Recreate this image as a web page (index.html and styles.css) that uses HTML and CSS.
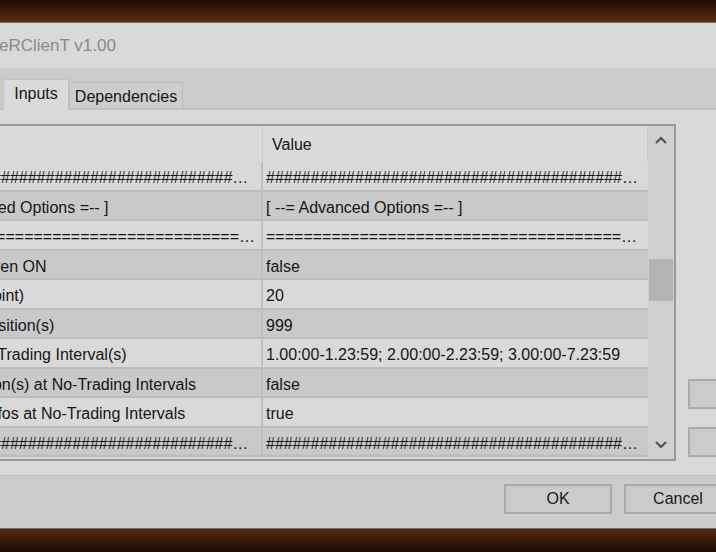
FILE: index.html
```html
<!DOCTYPE html>
<html>
  <head>
    <title>eRClienT v1.00</title>
    <link rel="stylesheet" href="styles.css">
  </head>

  <body>
    <div class="desk desk-top"></div>

    <div class="dialog">
      <div class="titlebar">eRClienT v1.00</div>

      <div class="tabstrip">
        <div class="tab selected">Inputs</div>
        <div class="tab">Dependencies</div>
      </div>

      <div class="panel">
        <div class="grid">
          <div class="grid-body">
            <div class="row head">
              <div class="cell name">Variable</div>
              <div class="cell value">Value</div>
            </div>
            <div class="row">
              <div class="cell name">############################################################</div>
              <div class="cell value">############################################################</div>
            </div>
            <div class="row">
              <div class="cell name">[ --= Advanced Options =-- ]</div>
              <div class="cell value">[ --= Advanced Options =-- ]</div>
            </div>
            <div class="row">
              <div class="cell name">================================================================</div>
              <div class="cell value">================================================================</div>
            </div>
            <div class="row">
              <div class="cell name">SL Break Even ON</div>
              <div class="cell value">false</div>
            </div>
            <div class="row">
              <div class="cell name">Slippage (point)</div>
              <div class="cell value">20</div>
            </div>
            <div class="row">
              <div class="cell name">Max Buy Position(s)</div>
              <div class="cell value">999</div>
            </div>
            <div class="row">
              <div class="cell name">Custom No-Trading Interval(s)</div>
              <div class="cell value">1.00:00-1.23:59; 2.00:00-2.23:59; 3.00:00-7.23:59</div>
            </div>
            <div class="row">
              <div class="cell name">Keep Position(s) at No-Trading Intervals</div>
              <div class="cell value">false</div>
            </div>
            <div class="row">
              <div class="cell name">Skip Alert Infos at No-Trading Intervals</div>
              <div class="cell value">true</div>
            </div>
            <div class="row">
              <div class="cell name">############################################################</div>
              <div class="cell value">############################################################</div>
            </div>
          </div>

          <div class="scrollbar">
            <div class="scroll-btn">
              <svg width="12" height="8" viewBox="0 0 12 8"><path d="M1 7 L6 2 L11 7" /></svg>
            </div>
            <div class="scroll-track">
              <div class="scroll-thumb"></div>
            </div>
            <div class="scroll-btn">
              <svg width="12" height="8" viewBox="0 0 12 8"><path d="M1 1 L6 6 L11 1" /></svg>
            </div>
          </div>
        </div>

        <div class="side">
          <button class="btn">Load</button>
          <button class="btn">Save</button>
        </div>
      </div>

      <div class="footer">
        <button class="btn">OK</button>
        <button class="btn">Cancel</button>
      </div>
    </div>

    <div class="desk desk-bottom"></div>
  </body>
</html>
```

FILE: styles.css
```css
html,
body {
  margin: 0;
  width: 716px;
  height: 552px;
  overflow: hidden;
}

body {
  font: 16px "Liberation Sans", Arial, sans-serif;
  color: #151515;
  background: #2a1505;
}

.desk {
  width: 100%;
}

.desk-top {
  height: 22px;
  background: linear-gradient(#1b0d04, #5b2c0a);
  border-bottom: 1px solid #707070;
}

.desk-bottom {
  height: 23px;
  background: linear-gradient(#56290a, #190c03);
  border-top: 1px solid #6c6c6c;
}

.dialog {
  /* the window is wider than the shot, its left part is off screen */
  margin-left: -92px;
  width: 912px;
  background: #d9d9d9;
}

.titlebar {
  height: 45px;
  line-height: 46px;
  padding-left: 91px;
  font-size: 17px;
  color: #8a8a8a;
}

.tabstrip {
  display: flex;
  align-items: flex-end;
  height: 40px;
  padding-left: 95px;
  background: #cbcbcb;
  border-bottom: 2px solid #c1c1c1;
}

.tab {
  box-sizing: border-box;
  width: 114px;
  height: 26px;
  line-height: 27px;
  text-align: center;
  border: 1px solid #bababa;
  border-bottom: none;
  background: #cdcdcd;
}

.tab.selected {
  width: 66px;
  height: 31px;
  line-height: 27px;
  margin-bottom: -2px;
  background: #dadada;
  border-color: #c2c2c2;
}

.panel {
  display: flex;
  padding: 14px 0;
}

.grid {
  display: flex;
  box-sizing: border-box;
  width: 768px;
  height: 337px;
  border: 2px solid #999;
  border-left: none;
  background: #d9d9d9;
}

.grid-body {
  flex: 1;
  overflow: hidden;
}

.row {
  display: flex;
  box-sizing: border-box;
  height: 29.5px;
  border-bottom: 2px solid #bcbcbc;
  background: #c9c9c9;
}

.row:nth-child(even) {
  background: #d9d9d9;
}

.row.head {
  height: 36px;
  border-bottom: none;
  background: #dadada;
}

.cell {
  box-sizing: border-box;
  min-width: 0;
  padding: 2px 4px 0 4px;
  line-height: 27px;
  white-space: nowrap;
  overflow: hidden;
  text-overflow: ellipsis;
}

.cell.name {
  width: 355px;
  flex: none;
  border-right: 2px solid #c0c0c0;
}

.cell.value {
  flex: 1;
  padding-left: 3px;
  padding-right: 10px;
}

.head .cell {
  padding-top: 0;
  line-height: 37px;
}

.head .cell.name {
  border-right: 1px solid #cbcbcb;
}

.head .cell.value {
  padding-left: 9px;
  border-right: 1px solid #cbcbcb;
}

.scrollbar {
  display: flex;
  flex-direction: column;
  width: 26px;
  background: #d0d0d0;
}

.scroll-btn {
  display: flex;
  align-items: center;
  justify-content: center;
  height: 28px;
}

.scroll-btn path {
  fill: none;
  stroke: #505050;
  stroke-width: 2;
}

.scroll-track {
  flex: 1;
}

.scroll-thumb {
  margin: 105px 1px 0 1px;
  height: 42px;
  background: #b3b3b3;
}

.side {
  display: flex;
  flex-direction: column;
  justify-content: flex-end;
  gap: 18px;
  padding: 0 0 4px 12px;
}

.btn {
  box-sizing: border-box;
  width: 108px;
  height: 30px;
  font: 16px "Liberation Sans", Arial, sans-serif;
  color: #1a1a1a;
  background: #cbcbcb;
  border: 2px solid #ababab;
  padding: 0;
}

.footer {
  display: flex;
  justify-content: flex-end;
  gap: 12px;
  box-sizing: border-box;
  height: 53px;
  padding: 8px 88px 0 0;
  background: #cccccc;
  border-top: 1px solid #c0c0c0;
}
```
